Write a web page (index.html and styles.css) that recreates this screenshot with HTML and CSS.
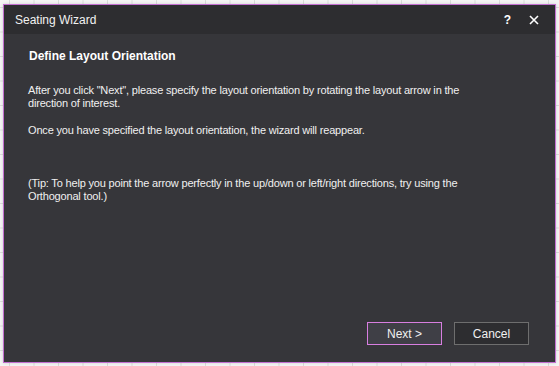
FILE: index.html
```html
<!DOCTYPE html>
<html lang="en">
<head>
  <meta charset="UTF-8" />
  <title>Seating Wizard</title>
  <link rel="stylesheet" href="styles.css">
</head>
<body>
  <div class="wizard">
    <div class="title-bar">
      <span class="title">Seating Wizard</span>
      <div class="title-buttons">
        <span class="help">?</span>
        <svg class="close" width="10" height="10" viewBox="0 0 10 10">
          <path d="M1 1 L9 9 M9 1 L1 9" stroke="#ffffff" stroke-width="1.6" />
        </svg>
      </div>
    </div>
    <div class="content">
      <h3>Define Layout Orientation</h3>
      <p>After you click "Next", please specify the layout orientation by rotating the layout arrow in the direction of interest.</p>
      <p>Once you have specified the layout orientation, the wizard will reappear.</p>
      <p class="tip">(Tip: To help you point the arrow perfectly in the up/down or left/right directions, try using the Orthogonal tool.)</p>
    </div>
    <div class="footer">
      <button class="primary">Next &gt;</button>
      <button>Cancel</button>
    </div>
  </div>
</body>
</html>
```

FILE: styles.css
```css
html, body {
  height: 100%;
}

body {
  margin: 0;
  padding: 4px 3px 0 3px;
  box-sizing: border-box;
  background-color: #f4f4f4;
  background-image:
    linear-gradient(to right, #d9ddd9 1px, transparent 1px),
    linear-gradient(to bottom, #d9ddd9 1px, transparent 1px);
  background-size: 24.5px 24.5px;
  background-position: 9px 7px;
  font-family: "Liberation Sans", Arial, sans-serif;
}

.wizard {
  width: 553px;
  height: 359px;
  box-sizing: border-box;
  border: 1px solid #c26fd0;
  background-color: #36363a;
  display: flex;
  flex-direction: column;
  box-shadow: 0 0 3px rgba(0, 0, 0, 0.15);
}

.title-bar {
  height: 29px;
  background-color: #2d2d30;
  display: flex;
  align-items: center;
  justify-content: space-between;
  padding: 0 16px 0 11px;
  color: #ffffff;
}

.title {
  font-size: 12px;
  color: #f2f2f2;
}

.title-buttons {
  display: flex;
  align-items: center;
  gap: 18px;
}

.help {
  font-weight: bold;
  font-size: 12px;
  color: #ffffff;
}

.close {
  display: block;
}

.content {
  flex: 1;
  padding: 16px 24px 0 24px;
  color: #f0f0f0;
  font-size: 11px;
  line-height: 13px;
}

.content h3 {
  margin: 0 0 21px 1px;
  font-size: 12px;
  font-weight: bold;
  color: #ffffff;
}

.content p {
  margin: 0 0 14px 0;
  max-width: 450px;
  letter-spacing: -0.18px;
}

.content .tip {
  margin-top: 40px;
}

.footer {
  display: flex;
  justify-content: flex-end;
  gap: 12px;
  padding: 0 26px 17px 0;
}

button {
  width: 75px;
  height: 23px;
  font-family: "Liberation Sans", Arial, sans-serif;
  font-size: 12px;
  color: #f0f0f0;
  background-color: #2d2d30;
  border: 1px solid #6e6e6e;
  padding: 0;
}

button.primary {
  background-color: #3f3f46;
  border-color: #d87ee0;
}
```
